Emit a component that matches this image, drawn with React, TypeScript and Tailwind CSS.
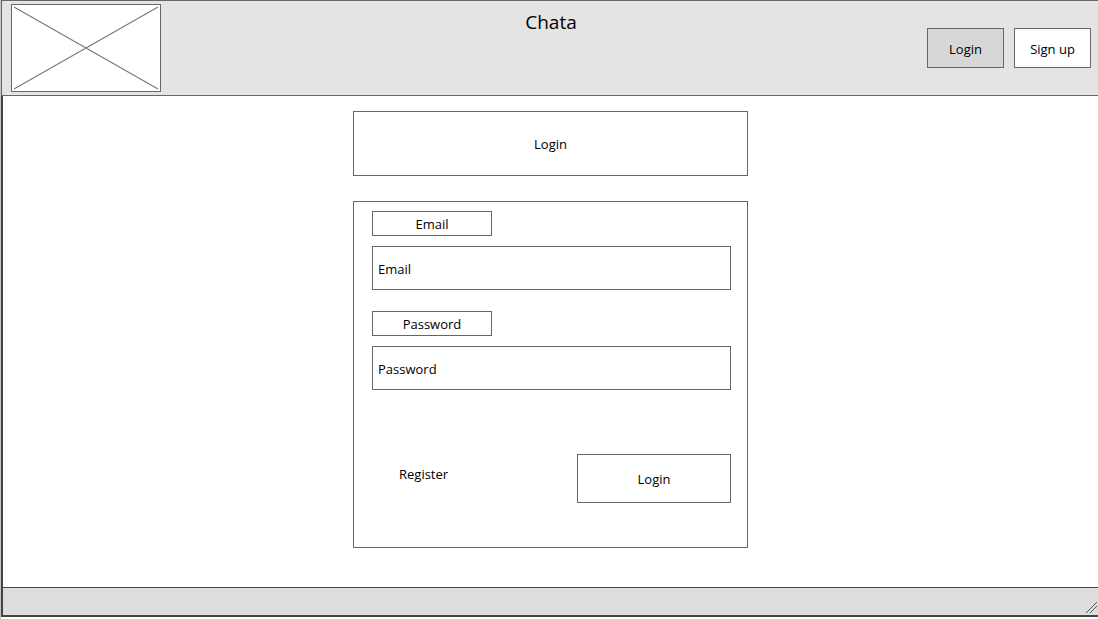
import type { ReactNode } from "react";

function ImagePlaceholder() {
  return (
    <div className="h-[88px] w-[150px] border border-[#666] bg-white">
      <svg
        className="h-full w-full"
        viewBox="0 0 148 86"
        fill="none"
        stroke="#777"
        strokeWidth="1.1"
        role="img"
        aria-label="Logo"
      >
        <path d="M2 2 146 84M2 84 146 2" />
      </svg>
    </div>
  );
}

function NavButton({ active, children }: { active?: boolean; children: ReactNode }) {
  return (
    <button
      type="button"
      className={
        active
          ? "h-10 w-[77px] border border-[#666] bg-[#d7d7d7] pt-px"
          : "h-10 w-[77px] border border-[#666] bg-white pt-px"
      }
    >
      {children}
    </button>
  );
}

function Field({ id, label, type }: { id: string; label: string; type: string }) {
  return (
    <div className="flex flex-col gap-2.5">
      <label
        htmlFor={id}
        className="flex h-[25px] w-[120px] items-center justify-center border border-[#666]"
      >
        {label}
      </label>
      <input
        id={id}
        type={type}
        placeholder={label}
        className="h-11 w-full border border-[#666] bg-white px-[5px] pt-px outline-none placeholder:text-black placeholder:opacity-100"
      />
    </div>
  );
}

export default function App() {
  return (
    <div className="flex min-h-screen flex-col border-l border-[#c4c4c4] bg-white pb-0.5 font-['Open_Sans','Noto_Sans',sans-serif] text-[13px] leading-5 text-black">
      <header className="grid grid-cols-[1fr_auto_1fr] border-y border-l border-[#666] bg-[#e4e4e4] py-[3px] pr-[7px] pl-[9px]">
        <ImagePlaceholder />
        <h1 className="pt-1 text-[19px] leading-7">Chata</h1>
        <nav className="flex items-center gap-2.5 justify-self-end">
          <NavButton active>Login</NavButton>
          <NavButton>Sign up</NavButton>
        </nav>
      </header>

      <main className="flex flex-1 flex-col items-center gap-[25px] border-l-2 border-[#444] px-4 pt-[15px] pb-8">
        <h2 className="flex h-[65px] w-full max-w-[395px] items-center justify-center border border-[#666]">
          Login
        </h2>
        <form
          className="w-full max-w-[395px] border border-[#666] pt-[9px] pr-4 pb-11 pl-[18px]"
          onSubmit={(event) => event.preventDefault()}
        >
          <div className="flex flex-col gap-[21px]">
            <Field id="email" label="Email" type="email" />
            <Field id="password" label="Password" type="password" />
          </div>
          <div className="mt-16 flex items-start justify-between pl-[27px]">
            <a href="#register" className="leading-10">
              Register
            </a>
            <button type="submit" className="h-[49px] w-[154px] border border-[#666] bg-white">
              Login
            </button>
          </div>
        </form>
      </main>

      <footer className="flex h-[30px] items-end justify-end border-t border-b-2 border-l-2 border-[#444] bg-[#ddd] pb-0.5">
        <svg
          className="h-3 w-3"
          viewBox="0 0 12 12"
          fill="none"
          stroke="#555"
          strokeWidth="1"
          aria-hidden="true"
        >
          <path d="M0 12 11 1M4 12 11 5" />
        </svg>
      </footer>
    </div>
  );
}
